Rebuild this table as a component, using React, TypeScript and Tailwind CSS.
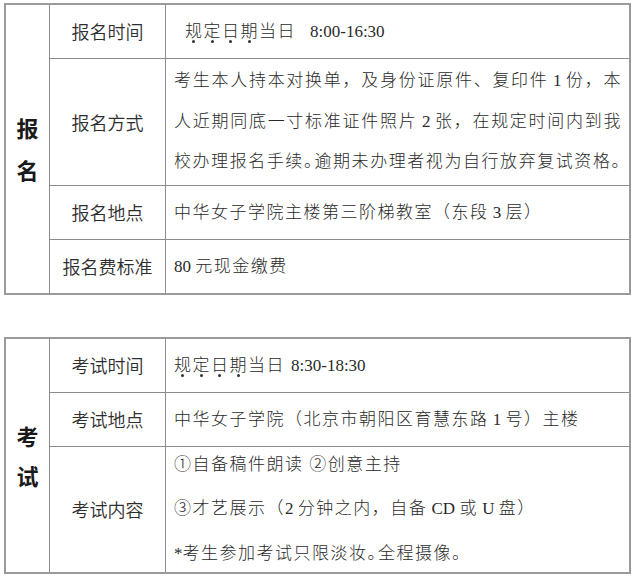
import React from "react";

const sans = "font-['Noto_Sans_CJK_SC','Noto_Sans',sans-serif]";
const serif = "font-['Liberation_Serif','Noto_Sans_CJK_SC',serif]";

function Dot({ c }: { c: string }) {
  return (
    <span className="relative">
      {c}
      <span className="absolute left-[7px] bottom-[-2px] w-[3px] h-[3px] rounded-full bg-[#333]" />
    </span>
  );
}

function L({ children }: { children: React.ReactNode }) {
  return <span className="tracking-normal">{children}</span>;
}

function Label({ children, last }: { children: React.ReactNode; last?: boolean }) {
  return (
    <div
      className={`flex items-center justify-center border-r border-[#8c8c8c] ${last ? "" : "border-b"} ${sans} font-[350] text-[18px] text-[#2e2e2e]`}
    >
      {children}
    </div>
  );
}

function Content({
  children,
  last,
  extra = "",
}: {
  children: React.ReactNode;
  last?: boolean;
  extra?: string;
}) {
  return (
    <div
      className={`flex flex-col justify-center border-[#8c8c8c] ${last ? "" : "border-b"} ${serif} font-light text-[17px] text-[#2a2a2a] tracking-[1.5px] pl-[8px] pr-[7px] ${extra}`}
    >
      {children}
    </div>
  );
}

function Half() {
  return <span className="tracking-[-6.5px]">。</span>;
}

export default function App() {
  return (
    <div className="w-[635px] h-[576px] bg-white overflow-hidden pt-[3px]">
      {/* Table 1 */}
      <div className="ml-[4px] w-[627px] border-2 border-[#9a9a9a] grid grid-cols-[44px_116px_1fr] grid-rows-[54px_127px_54px_53px]">
        <div
          className={`row-span-4 border-r border-[#8c8c8c] flex flex-col items-center justify-center ${sans} font-bold text-[22px] leading-[42px] text-[#1a1a1a] pb-[2px]`}
        >
          <span>报</span>
          <span>名</span>
        </div>

        <Label>报名时间</Label>
        <Content extra="!pl-[19px]">
          <div>
            <Dot c="规" />
            <Dot c="定" />
            <Dot c="日" />
            <Dot c="期" />
            当日
            <L>
              <span className="ml-[14px]">8:00-16:30</span>
            </L>
          </div>
        </Content>

        <Label>报名方式</Label>
        <Content>
          <div className="leading-[40.5px] [text-align-last:justify]">
            考生本人持本对换单，及身份证原件、复印件<L> 1 </L>份，本
          </div>
          <div className="leading-[40.5px] [text-align-last:justify]">
            人近期同底一寸标准证件照片<L> 2 </L>张，在规定时间内到我
          </div>
          <div className="leading-[40.5px] [text-align-last:justify]">
            校办理报名手续<Half />逾期未办理者视为自行放弃复试资格<Half />
          </div>
        </Content>

        <Label>报名地点</Label>
        <Content>
          <div>
            中华女子学院主楼第三阶梯教室（东段<L> 3 </L>层）
          </div>
        </Content>

        <Label last>报名费标准</Label>
        <Content last>
          <div>
            <L>80 </L>元现金缴费
          </div>
        </Content>
      </div>

      {/* Table 2 */}
      <div className="mt-[42px] ml-[4px] w-[627px] border-2 border-[#9a9a9a] grid grid-cols-[44px_116px_1fr] grid-rows-[54px_54px_125px]">
        <div
          className={`row-span-3 border-r border-[#8c8c8c] flex flex-col items-center justify-center ${sans} font-bold text-[22px] leading-[40px] text-[#1a1a1a] pb-[2px]`}
        >
          <span>考</span>
          <span>试</span>
        </div>

        <Label>考试时间</Label>
        <Content>
          <div>
            <Dot c="规" />
            <Dot c="定" />
            <Dot c="日" />
            <Dot c="期" />
            当日
            <L>
              <span className="ml-[6px]">8:30-18:30</span>
            </L>
          </div>
        </Content>

        <Label>考试地点</Label>
        <Content>
          <div>
            中华女子学院（北京市朝阳区育慧东路<L> 1 </L>号）主楼
          </div>
        </Content>

        <Label last>考试内容</Label>
        <Content last>
          <div className="leading-[44.5px]">①自备稿件朗读 ②创意主持</div>
          <div className="leading-[44.5px]">
            ③才艺展示（<L>2 </L>分钟之内，自备<L> CD </L>或<L> U </L>盘）
          </div>
          <div className="leading-[44.5px]">
            <L>*</L>考生参加考试只限淡妆<Half />全程摄像<Half />
          </div>
        </Content>
      </div>
    </div>
  );
}
